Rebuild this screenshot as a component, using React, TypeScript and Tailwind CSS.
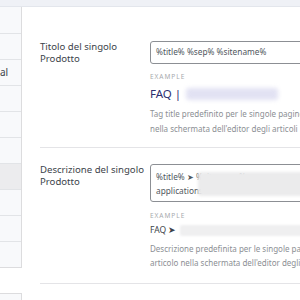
const rows = ['', '', 'al', '', '', '', 'active', '', '', '']

function Sidebar() {
  return (
    <div className="w-[22px] shrink-0">
      <div className="border-r border-b border-[#dcdcde] bg-[#f8f9fb]">
        {rows.map((r, i) => (
          <div
            key={i}
            className={`h-[26px] flex items-center text-[10px] text-[#3c434a] ${i > 0 ? 'border-t border-[#e2e4e7]' : ''} ${r === 'active' ? 'bg-[#ececee]' : ''}`}
          >
            {r === 'al' ? 'al' : ''}
          </div>
        ))}
      </div>
      <div className="mt-[25px] h-[26px] border-r border-t border-[#dcdcde] bg-[#f8f9fb]" />
    </div>
  )
}

export default function App() {
  return (
    <div className="w-[300px] h-[300px] overflow-hidden bg-white font-['Noto_Sans',sans-serif]">
      <div className="h-[7px] bg-[#eff1f6] border-b border-[#e3e6ec]" />
      <div className="flex">
        <Sidebar />
        <div className="flex-1 min-w-0 pl-[18px]">
          {/* titolo */}
          <div className="flex pt-[34px] pb-[11px] border-b border-[#e4e4e7] w-[300px]">
            <div className="w-[110px] shrink-0 text-[9.6px] leading-[11.5px] text-[#3c434a]">
              <p>Titolo del singolo</p>
              <p>Prodotto</p>
            </div>
            <div className="w-[190px] shrink-0">
              <div className="h-[23px] w-[200px] rounded-[3px] border border-[#8c8f94] flex items-center pl-[5px] text-[8.3px] text-[#50575e]">
                %title% %sep% %sitename%
              </div>
              <div className="mt-[8px] text-[6.5px] leading-[10px] tracking-[0.15em] text-[#a7aaad]">EXAMPLE</div>
              <div className="mt-[4px] flex items-center h-[16px] text-[11.5px] text-[#2e2f6f]">
                <span>FAQ |</span>
                <span className="ml-[5px] h-[12px] w-[92px] rounded-[3px] bg-[#e2e2f3] blur-[2px]" />
              </div>
              <div className="mt-[4px] text-[8px] leading-[15px] text-[#8c8f94] whitespace-nowrap">
                <p>Tag title predefinito per le singole pagine prodotto</p>
                <p>nella schermata dell'editor degli articoli</p>
              </div>
            </div>
          </div>
          {/* descrizione */}
          <div className="flex pt-[16px] pb-[13px] border-b border-[#e4e4e7] w-[300px]">
            <div className="w-[110px] shrink-0 text-[9.6px] leading-[11.5px] text-[#3c434a] whitespace-nowrap">
              <p>Descrizione del singolo</p>
              <p>Prodotto</p>
            </div>
            <div className="w-[190px] shrink-0">
              <div className="relative h-[38px] w-[200px] rounded-[3px] border border-[#8c8f94] pl-[5px] pt-[5px] text-[8.3px] leading-[14px] text-[#50575e] whitespace-nowrap">
                <p>%title% ➤ %sitename%</p>
                <p>applications</p>
                <span className="absolute left-[47px] top-[7px] right-0 h-[24px] rounded-[3px] bg-[#ebebec] blur-[1.5px]" />
              </div>
              <div className="mt-[9px] text-[6.5px] leading-[10px] tracking-[0.15em] text-[#a7aaad]">EXAMPLE</div>
              <div className="mt-[2px] flex items-center h-[14px] text-[8.5px] text-[#3c434a]">
                <span>FAQ ➤</span>
                <span className="ml-[4px] h-[11px] flex-1 rounded-[2px] bg-[#efeff0] blur-[1px]" />
              </div>
              <div className="mt-[5px] text-[8px] leading-[14px] text-[#8c8f94] whitespace-nowrap">
                <p>Descrizione predefinita per le singole pagine</p>
                <p>articolo nella schermata dell'editor degli articoli</p>
              </div>
            </div>
          </div>
          <div className="flex pt-[16px] w-[300px]">
            <div className="w-[110px] shrink-0" />
            <div className="h-[30px] w-[200px] rounded-[3px] border border-[#8c8f94]" />
          </div>
        </div>
      </div>
    </div>
  )
}
